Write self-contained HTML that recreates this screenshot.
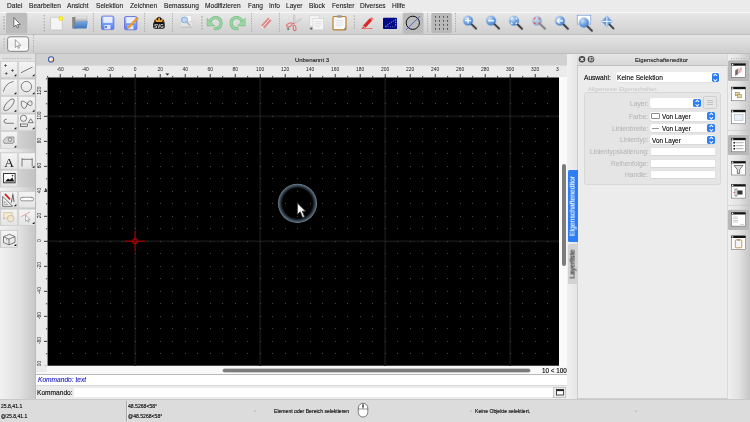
<!DOCTYPE html>
<html><head><meta charset="utf-8">
<style>
*{margin:0;padding:0;box-sizing:border-box}
html,body{width:750px;height:422px;overflow:hidden;background:#e6e6e6;font-family:"Liberation Sans",sans-serif;color:#222}
.a{position:absolute}
.t{position:absolute;white-space:nowrap;line-height:1;will-change:transform}
svg,.lbl{will-change:transform}
#menu{left:0;top:0;width:750px;height:12px;background:#ebebeb}
#menu .t{top:2.6px;font-size:6.6px;color:#141414;-webkit-text-stroke:0.08px #141414}
#tb1{left:0;top:12px;width:750px;height:22.4px;background:linear-gradient(#e8e8e8,#cfcfcf);border-top:1px solid #f8f8f8}
#tb2{left:0;top:34.4px;width:750px;height:19.4px;background:linear-gradient(#e5e5e5,#cdcdcd);border-top:1px solid #bfbfbf;border-bottom:0.9px solid #bdbdbd}
#left{left:0;top:53.5px;width:35.5px;height:345.5px;background:linear-gradient(90deg,#f1f1f1 0%,#e0e0e0 55%,#c6c6c6 100%)}
#mdi{left:35.5px;top:53.5px;width:531px;height:345.5px;background:#e8e8e8}
#status{left:0;top:399px;width:750px;height:23px;background:#dcdcdc;border-top:1px solid #c9c9c9}
#dockstrip{left:566.5px;top:53.5px;width:11px;height:345.5px;background:#e8e8e8}
#dock{left:577px;top:53.5px;width:150.3px;height:345.7px;background:#ececec;border-left:1px solid #cdcdcd;border-bottom:1px solid #cfcfcf}
#rtb{left:727.3px;top:53.5px;width:22.7px;height:345.5px;background:linear-gradient(90deg,#efefef 0%,#e2e2e2 50%,#c6c6c6 100%);border-left:1px solid #d9d9d9}
.combo{background:#fff;border-radius:2px;box-shadow:0 0.2px 0.6px rgba(0,0,0,0.18)}
.bluebtn{background:#2b7cf7;border-radius:1.8px}
.bluebtn::before{content:"";position:absolute;left:50%;top:16%;width:1.6px;height:1.6px;margin-left:-0.8px;border-left:0.6px solid #fff;border-top:0.6px solid #fff;transform:rotate(45deg)}
.bluebtn::after{content:"";position:absolute;left:50%;bottom:16%;width:1.6px;height:1.6px;margin-left:-0.8px;border-right:0.6px solid #fff;border-bottom:0.6px solid #fff;transform:rotate(45deg)}
.field{background:#fff;border:0.5px solid #e2e2e2;border-bottom-color:#d6d6d6}
.lbl{position:absolute;right:calc(750px - 648.2px);font-size:6.65px;line-height:1;color:#b2b2b2;white-space:nowrap}
.st{font-size:5.1px;color:#111;-webkit-text-stroke:0.15px #111}
</style></head><body>
<div id="menu" class="a">
 <span class="t" style="left:7px">Datei</span>
 <span class="t" style="left:28.6px">Bearbeiten</span>
 <span class="t" style="left:67px">Ansicht</span>
 <span class="t" style="left:95.5px">Selektion</span>
 <span class="t" style="left:130px">Zeichnen</span>
 <span class="t" style="left:163.8px">Bemassung</span>
 <span class="t" style="left:205px">Modifizieren</span>
 <span class="t" style="left:248px">Fang</span>
 <span class="t" style="left:268.8px">Info</span>
 <span class="t" style="left:286px">Layer</span>
 <span class="t" style="left:309px">Block</span>
 <span class="t" style="left:331.7px">Fenster</span>
 <span class="t" style="left:360px">Diverses</span>
 <span class="t" style="left:391.7px">Hilfe</span>
</div>
<div id="tb1" class="a"></div>
<svg class="a" style="left:0;top:0" width="750" height="40" viewBox="0 0 750 40"><defs>
 <radialGradient id="lens" cx="0.35" cy="0.3" r="0.8"><stop offset="0" stop-color="#cfe2f8"/><stop offset="0.5" stop-color="#6ea2e0"/><stop offset="1" stop-color="#3a72c4"/></radialGradient>
 <linearGradient id="fold" x1="0" y1="0" x2="0" y2="1"><stop offset="0" stop-color="#7aaae0"/><stop offset="1" stop-color="#3f73b8"/></linearGradient>
 <linearGradient id="flop" x1="0" y1="0" x2="0" y2="1"><stop offset="0" stop-color="#a9c4ff"/><stop offset="1" stop-color="#4f7ef0"/></linearGradient>
 <radialGradient id="yel"><stop offset="0" stop-color="#ffff60"/><stop offset="0.6" stop-color="#f0e020"/><stop offset="1" stop-color="#f0e020" stop-opacity="0"/></radialGradient>
 <g id="mag"><circle r="5.2" fill="url(#lens)" stroke="#c9d3dd" stroke-width="0.8"/><path d="M3.6 3.6L8 8" stroke="#444" stroke-width="1.8" stroke-linecap="round"/><path d="M3.6 3.6L8.6 8.6" stroke="#000" stroke-opacity="0.08" stroke-width="4"/></g>
</defs>
<!-- handle -->
<g fill="#9a9a9a"><rect x="3" y="16.5" width="2" height="0.8"/><rect x="3" y="19.5" width="2" height="0.8"/><rect x="3" y="22.5" width="2" height="0.8"/><rect x="3" y="25.5" width="2" height="0.8"/><rect x="3" y="28.5" width="2" height="0.8"/></g>
<rect x="6" y="12.7" width="21.3" height="20.7" rx="1.5" fill="#bcbcbc"/>
<path d="M13.9 17.6v9.4l2.1-2 1.5 3 1.3-.6-1.4-2.9h2.9z" fill="#fff" stroke="#444" stroke-width="0.7" stroke-linejoin="round"/>
<!-- separators -->
<g fill="#6a6a6a"><circle cx="44.2" cy="15.8" r="0.5"/><circle cx="44.2" cy="18.8" r="0.5"/><circle cx="44.2" cy="21.8" r="0.5"/><circle cx="44.2" cy="24.8" r="0.5"/><circle cx="44.2" cy="27.8" r="0.5"/><circle cx="44.2" cy="30.8" r="0.5"/></g>
<g stroke="#9a9a9a" stroke-width="0.8" stroke-dasharray="1.2 1.3">
 <path d="M93.4 13v20M144.6 13v20M172.5 13v20M251.5 13v20M279.4 13v20M427.6 13v20M455.5 13v20"/>
</g>
<g fill="#a0a0a0"><rect x="201" y="16.5" width="2" height="0.8"/><rect x="201" y="19.5" width="2" height="0.8"/><rect x="201" y="22.5" width="2" height="0.8"/><rect x="201" y="25.5" width="2" height="0.8"/><rect x="201" y="28.5" width="2" height="0.8"/></g>
<g fill="#7a7a7a"><circle cx="354.3" cy="16" r="0.5"/><circle cx="354.3" cy="19" r="0.5"/><circle cx="354.3" cy="22" r="0.5"/><circle cx="354.3" cy="25" r="0.5"/><circle cx="354.3" cy="28" r="0.5"/></g>
<!-- new -->
<rect x="50.5" y="17.3" width="11.8" height="12.7" rx="0.8" fill="#f4f4f4" stroke="#b8b8b8" stroke-width="0.6"/>
<circle cx="60.9" cy="18.5" r="3" fill="url(#yel)"/>
<!-- open -->
<defs><linearGradient id="fback" x1="0" y1="0" x2="1" y2="0"><stop offset="0" stop-color="#9a9a9a"/><stop offset="1" stop-color="#707070"/></linearGradient>
<linearGradient id="paper" x1="0" y1="0" x2="0" y2="1"><stop offset="0" stop-color="#f4f4f4"/><stop offset="1" stop-color="#a8a8a8"/></linearGradient></defs>
<path d="M72 17h4v11.6h-4z" fill="url(#fback)"/>
<rect x="75.2" y="16.1" width="11.8" height="5.6" fill="url(#paper)" stroke="#b0b0b0" stroke-width="0.4"/>
<path d="M75.6 21.2L88 21L86.5 28.6H73.7Z" fill="url(#fold)"/>
<!-- save -->
<rect x="101.5" y="16.1" width="12.4" height="13.5" rx="1.6" fill="url(#flop)" stroke="#6a70d8" stroke-width="0.9"/>
<rect x="103.3" y="16.8" width="9" height="6" fill="#e8eeff"/>
<rect x="104.5" y="25" width="6" height="4.3" fill="#dfe6f6"/><rect x="105.3" y="26" width="1.5" height="2" fill="#3d5bc0"/>
<!-- save as -->
<rect x="124.5" y="16.5" width="12.4" height="13.3" rx="1.6" fill="url(#flop)" stroke="#6a70d8" stroke-width="0.9"/>
<rect x="126.3" y="17.2" width="9" height="6" fill="#e8eeff"/>
<rect x="127.5" y="25.3" width="6" height="4" fill="#dfe6f6"/>
<path d="M128 26.5l9-9.3 1.4 1.4-9 9.3-1.9.5z" fill="#f5a030" stroke="#c07010" stroke-width="0.4"/>
<!-- svg -->
<path d="M153.8 23.2Q154 19.2 156.6 18.6Q157.8 16.8 159.1 16.8Q160.5 16.8 161.6 18.6Q164.3 19.2 164.5 23.2z" fill="#141414"/>
<g fill="#f5a623"><ellipse cx="159.1" cy="19.5" rx="0.9" ry="2.2"/><ellipse cx="156.7" cy="20.6" rx="0.9" ry="2" transform="rotate(-45 156.7 20.6)"/><ellipse cx="161.5" cy="20.6" rx="0.9" ry="2" transform="rotate(45 161.5 20.6)"/><ellipse cx="155.6" cy="22.5" rx="0.8" ry="1.6" transform="rotate(-75 155.6 22.5)"/><ellipse cx="162.6" cy="22.5" rx="0.8" ry="1.6" transform="rotate(75 162.6 22.5)"/><path d="M156 23.3a3.1 3 0 0 1 6.2 0z"/></g>
<rect x="153.2" y="22.1" width="11.5" height="6.6" rx="1.8" fill="#111"/>
<text x="158.95" y="27.9" font-size="5.4" font-weight="bold" fill="#e8e8e8" text-anchor="middle" font-family="Liberation Sans" textLength="9.5" lengthAdjust="spacingAndGlyphs">SVG</text>
<!-- print preview -->
<rect x="182" y="15.4" width="9.7" height="7" fill="#f8f8f8" stroke="#d0d0d0" stroke-width="0.5"/>
<rect x="180" y="21.5" width="13.3" height="6.3" rx="1.2" fill="#e4e4e4" stroke="#c4c4c4" stroke-width="0.5"/>
<rect x="181" y="26.3" width="11.3" height="1.8" fill="#c8c8c8"/>
<path d="M186.8 22.2l3.6 3.4" stroke="#a8a8a8" stroke-width="1.3"/>
<circle cx="184.5" cy="19.8" r="3" fill="#bcd4f0" stroke="#6a9ad8" stroke-width="0.7"/>
<!-- undo/redo -->
<g id="undo">
<path d="M210.2 21.6A5.6 5.6 0 1 1 213.8 28.4" fill="none" stroke="#66b575" stroke-width="3"/>
<path d="M210.2 21.6A5.6 5.6 0 1 1 213.8 28.4" fill="none" stroke="#9ad6a3" stroke-width="1.9"/>
<path d="M207 18.2V25.9H214.7z" fill="#9ad6a3" stroke="#66b575" stroke-width="0.5" stroke-linejoin="round"/>
</g>
<use href="#undo" transform="translate(452.2 0) scale(-1 1)"/>
<!-- eraser -->
<path d="M261 25.6L268.2 17.4L271.6 20.4L264.4 28.6L261.3 29.2z" fill="#e07a7a" opacity="0.9"/>
<path d="M262.6 26.9L269.9 18.9" stroke="#fff" stroke-width="0.9"/>
<path d="M261 25.6l3.4 3-3.1.6z" fill="#f2f2f2"/>
<path d="M261.3 28.8l0.6-.1" stroke="#777" stroke-width="0.6"/>
<path d="M263 28.8h8" stroke="#d6d6d6" stroke-width="0.5"/>
<!-- scissors -->
<path d="M293.6 15.3l1.3 0.2-0.2 8.6-1.2-0.2z" fill="#f4f4f4" stroke="#9a9a9a" stroke-width="0.45"/>
<path d="M300.8 18.6l0.5 1-5.6 3.3-0.6-0.8z" fill="#f4f4f4" stroke="#9a9a9a" stroke-width="0.45"/>
<ellipse cx="289.4" cy="24.9" rx="3.1" ry="1.5" transform="rotate(-28 289.4 24.9)" fill="none" stroke="#e07272" stroke-width="1.1"/>
<ellipse cx="294.6" cy="28" rx="1.4" ry="2.8" transform="rotate(-8 294.6 28)" fill="none" stroke="#e07272" stroke-width="1.1"/>
<path d="M292.3 23.3l2.4 0.3" stroke="#e07272" stroke-width="1"/>
<path d="M288.2 27.6v2.6M286.9 28.9h2.6" stroke="#555" stroke-width="0.7"/>
<!-- copy -->
<rect x="309.8" y="15.8" width="9.3" height="10.6" fill="#f4f4f4" stroke="#c9c9c9" stroke-width="0.5"/>
<rect x="313" y="18.5" width="10.5" height="11.3" fill="#f6f6f6" stroke="#c9c9c9" stroke-width="0.5"/>
<g stroke="#d2d2d2" stroke-width="0.5"><path d="M315 21.5h6.5M315 23.3h6.5M315 25.1h6.5M315 26.9h5"/></g>
<path d="M311.2 27.2v2.8M309.8 28.6h2.8" stroke="#555" stroke-width="0.8"/>
<!-- paste -->
<rect x="333" y="16.5" width="13" height="13.3" rx="1" fill="#fbfbfb" stroke="#b97f2a" stroke-width="1.2"/>
<rect x="336.8" y="15.2" width="5.2" height="2.6" rx="0.8" fill="#9a9a9a"/>
<g stroke="#cfcfcf" stroke-width="0.5"><path d="M335.5 20.5h8M335.5 22.3h8M335.5 24.1h8M335.5 25.9h6"/></g>
<path d="M346 26.8l-3 3h3z" fill="#888"/>
<!-- pencil -->
<rect x="361.5" y="28.1" width="11" height="0.8" fill="#f05a5a"/>
<path d="M363.3 25.6L369.8 18.6L371.9 20.5L365.4 27.5L362.6 28.2z" fill="#dd1a1a" stroke="#a81010" stroke-width="0.35"/>
<path d="M364.2 26.3L370.5 19.5" stroke="#f05050" stroke-width="0.5"/>
<path d="M369.8 18.6L370.9 17.5Q371.6 17 372.4 17.7L373 18.3Q373.5 19 372.9 19.6L371.9 20.5z" fill="#f07070"/>
<path d="M363.3 25.6L365.4 27.5L362.6 28.2z" fill="#e8c8a0"/>
<path d="M362.6 28.2l0.9-1.5 0.6.6z" fill="#333"/>
<!-- blue box -->
<rect x="383" y="17.8" width="14" height="11.2" rx="0.8" fill="#000a86"/>
<g stroke="#fff" stroke-width="0.65" fill="none">
<path d="M385.3 26.5L395.5 19.5" stroke-dasharray="1.2 1.2"/>
<path d="M395.7 19.4V26.6" stroke-dasharray="1.3 1.1"/>
<path d="M385.5 26.8H395.5" stroke-dasharray="1 1.2" stroke-opacity="0.6"/>
</g>
<!-- circle btn -->
<rect x="402.7" y="12.7" width="20.8" height="21" rx="1.5" fill="#bcbcbc"/>
<circle cx="412.8" cy="22.8" r="6.6" fill="none" stroke="#111" stroke-width="1"/>
<path d="M406.2 29.7L420 16.1" stroke="#3040e0" stroke-width="0.7"/>
<!-- grid btn -->
<rect x="431.3" y="13" width="20.6" height="20.3" rx="1.5" fill="#b9b9b9"/>
<g fill="#3a3a3a">
<path d="M435 16.1h0.8v1.7h-0.8zM439.1 16.1h0.8v1.7h-0.8zM443.1 16.1h0.8v1.7h-0.8zM447.2 16.1h0.8v1.7h-0.8z"/>
<path d="M435 20.1h0.8v1.7h-0.8zM439.1 20.1h0.8v1.7h-0.8zM443.1 20.1h0.8v1.7h-0.8zM447.2 20.1h0.8v1.7h-0.8z"/>
<path d="M435 24.1h0.8v1.7h-0.8zM439.1 24.1h0.8v1.7h-0.8zM443.1 24.1h0.8v1.7h-0.8zM447.2 24.1h0.8v1.7h-0.8z"/>
<path d="M435 28h0.8v1.7h-0.8zM439.1 28h0.8v1.7h-0.8zM443.1 28h0.8v1.7h-0.8zM447.2 28h0.8v1.7h-0.8z"/>
</g>
<!-- zoom icons -->
<use href="#mag" x="468.1" y="20.7"/>
<path d="M465.2 20.7h5.8M468.1 17.8v5.8" stroke="#fff" stroke-width="1.3" opacity="0.9"/>
<use href="#mag" x="491.1" y="20.7"/>
<path d="M488.2 20.7h5.8" stroke="#fff" stroke-width="1.5" opacity="0.9"/>
<use href="#mag" x="514.1" y="20.9"/>
<path d="M511.3 19.6v-1.5h1.5M515.4 18.1h1.5v1.5M516.9 22.2v1.5h-1.5M512.8 23.7h-1.5v-1.5" fill="none" stroke="#fff" stroke-width="0.9"/>
<g opacity="0.55"><use href="#mag" x="537.1" y="20.9"/></g>
<path d="M534.3 19.6v-1.5h1.5M538.4 18.1h1.5v1.5M539.9 22.2v1.5h-1.5M535.8 23.7h-1.5v-1.5" fill="none" stroke="#e05050" stroke-width="1"/>
<use href="#mag" x="560" y="20.9"/>
<path d="M563 20.9h-5M559.5 18.6l-2.4 2.3 2.4 2.3" fill="none" stroke="#fff" stroke-width="1.3"/>
<rect x="577.2" y="15.2" width="13.6" height="8.9" fill="#fff" stroke="#5a8ad0" stroke-width="0.6"/>
<use href="#mag" x="584" y="22.8"/>
<path d="M606.9 15.5l5.8 5.9-5.8 5.9-5.8-5.9z" fill="#6a9ee0" stroke="#c0d4ea" stroke-width="0.5"/>
<path d="M602 21.4h9.8M606.9 16.5v9.8" stroke="#fff" stroke-width="0.9"/>
<path d="M609.5 24.5L613.5 28.5" stroke="#444" stroke-width="1.8" stroke-linecap="round"/>
</svg>
<div id="tb2" class="a"></div>
<div id="left" class="a"></div>
<svg class="a" style="left:0;top:0" width="36" height="400" viewBox="0 0 36 400">
 <rect x="0" y="53.5" width="35.3" height="8" fill="#e0e0e0"/>
 <path d="M3 58.4h29" stroke="#a8a8a8" stroke-width="0.8" stroke-dasharray="1.5 1.4"/>
 <defs><linearGradient id="lsec" x1="0" y1="0" x2="1" y2="0"><stop offset="0" stop-color="#cacaca"/><stop offset="0.5" stop-color="#d2d2d2"/><stop offset="1" stop-color="#c2c2c2"/></linearGradient></defs>
 <rect x="0" y="61" width="35.3" height="87.8" fill="url(#lsec)"/>
 <rect x="0" y="152.3" width="35.3" height="35" fill="url(#lsec)"/>
 <rect x="0" y="191" width="35.3" height="35" fill="url(#lsec)"/>
 <rect x="0" y="229.9" width="17.9" height="18" fill="#c6c6c6"/>
 <defs><linearGradient id="btn" x1="0" y1="0" x2="0" y2="1"><stop offset="0" stop-color="#f5f5f5"/><stop offset="1" stop-color="#e4e4e4"/></linearGradient></defs>
<rect x="0.9" y="61.7" width="16.30" height="15.80" fill="url(#btn)" stroke="#d0d0d0" stroke-width="0.5"/>
<rect x="18.8" y="61.7" width="16.30" height="15.80" fill="url(#btn)" stroke="#d0d0d0" stroke-width="0.5"/>
<rect x="0.9" y="79.2" width="16.30" height="16.20" fill="url(#btn)" stroke="#d0d0d0" stroke-width="0.5"/>
<rect x="18.8" y="79.2" width="16.30" height="16.20" fill="url(#btn)" stroke="#d0d0d0" stroke-width="0.5"/>
<rect x="0.9" y="96.7" width="16.30" height="16.20" fill="url(#btn)" stroke="#d0d0d0" stroke-width="0.5"/>
<rect x="18.8" y="96.7" width="16.30" height="16.20" fill="url(#btn)" stroke="#d0d0d0" stroke-width="0.5"/>
<rect x="0.9" y="114.2" width="16.30" height="16.30" fill="url(#btn)" stroke="#d0d0d0" stroke-width="0.5"/>
<rect x="18.8" y="114.2" width="16.30" height="16.30" fill="url(#btn)" stroke="#d0d0d0" stroke-width="0.5"/>
<rect x="0.9" y="131.6" width="16.30" height="17.10" fill="url(#btn)" stroke="#d0d0d0" stroke-width="0.5"/>
<rect x="0.9" y="153" width="16.30" height="16.00" fill="url(#btn)" stroke="#d0d0d0" stroke-width="0.5"/>
<rect x="18.8" y="153" width="16.30" height="16.00" fill="url(#btn)" stroke="#d0d0d0" stroke-width="0.5"/>
<rect x="0.9" y="170.5" width="16.30" height="16.20" fill="url(#btn)" stroke="#d0d0d0" stroke-width="0.5"/>
<rect x="0.9" y="191.8" width="16.30" height="15.70" fill="url(#btn)" stroke="#d0d0d0" stroke-width="0.5"/>
<rect x="18.8" y="191.8" width="16.30" height="15.70" fill="url(#btn)" stroke="#d0d0d0" stroke-width="0.5"/>
<rect x="0.9" y="209.3" width="16.30" height="15.90" fill="url(#btn)" stroke="#d0d0d0" stroke-width="0.5"/>
<rect x="18.8" y="209.3" width="16.30" height="15.90" fill="url(#btn)" stroke="#d0d0d0" stroke-width="0.5"/>
<rect x="0.9" y="230.6" width="16.30" height="16.70" fill="url(#btn)" stroke="#d0d0d0" stroke-width="0.5"/>
 <g fill="#111">
 <path d="M14 76.3h2.3v-2.3z"/><path d="M32.2 76.3h2.3v-2.3z"/>
 <path d="M14 94.2h2.3v-2.3z"/><path d="M32.2 94.2h2.3v-2.3z"/>
 <path d="M14 111.7h2.3v-2.3z"/><path d="M32.2 111.7h2.3v-2.3z"/>
 <path d="M14 129.3h2.3v-2.3z"/><path d="M32.2 129.3h2.3v-2.3z"/>
 <path d="M14 147.5h2.3v-2.3z"/>
 <path d="M32.2 167.8h2.3v-2.3z"/>
 <path d="M14 206.3h2.3v-2.3z"/><path d="M32.2 224h2.3v-2.3z"/>
 <path d="M14 246.1h2.3v-2.3z"/>
</g>
<g fill="none" stroke="#333" stroke-width="0.6">
 <!-- points -->
 <path d="M5.5 64v3M4 65.5h3M12.5 69v3M11 70.5h3M6.3 72v3M4.8 73.5h3"/>
 <!-- line -->
 <path d="M21 72.8L32.5 67"/>
 <!-- arc -->
 <path d="M3.4 91.5Q5.5 83 13.5 81.5"/>
 <!-- circle -->
 <circle cx="26.4" cy="86.6" r="5.2"/>
 <!-- ellipse -->
 <ellipse cx="9" cy="104.8" rx="7.3" ry="2.9" transform="rotate(-50 9 104.8)"/>
 <!-- spline -->
 <path d="M21.2 101.5Q21 108 24.3 108.5Q26.5 108 27.3 104Q28 101.5 30 100.8Q32.5 101 32 103.5Q32 106.5 29 105Q26 103 24.5 101.7Q22.5 100.5 21.2 101.5z"/>
 <!-- polyline -->
 <path d="M6.8 119.2Q4 119.2 4 121.2Q4 123.3 6.8 123.3H13.8"/>
 <!-- shapes -->
 <circle cx="23.5" cy="118.3" r="3.1"/><path d="M28.2 122.7l2.5-4 2.5 4z"/><rect x="20.5" y="124" width="6.8" height="2.6"/>
 <!-- hatch -->
 <g transform="translate(0 -1)"><path d="M3.3 141.5l3.4-3.5h7.2v5.5l-0.8 0.8h-9z" fill="#d0d0d0" stroke="#777" stroke-width="0.7"/>
 <path d="M4.5 143l3-3M6.5 143.5l4-4M10 143.5l3.5-3.5" stroke="#f0f0f0" stroke-width="0.4"/>
 <circle cx="10" cy="140.6" r="1.7" fill="#e8e8e8" stroke="#666" stroke-width="0.7"/></g>
 <!-- dimension -->
 <path d="M22 158.2v8.3M32.2 158.2v8.3M22 159.3h10.2" stroke="#333"/>
</g>
<text x="9" y="166.8" font-family="Liberation Serif" font-size="13.5" text-anchor="middle" fill="#111">A</text>
<!-- image -->
<rect x="3.6" y="173.5" width="11.5" height="9.3" fill="#fff" stroke="#222" stroke-width="0.9"/>
<path d="M5 181.6l3-3 2 1.2 2.2-2.4 2.1 4.2z" fill="#111"/><circle cx="12.5" cy="175.8" r="0.8" fill="#111"/>
<!-- dim tools -->
<path d="M2.7 196.4V206.3H12.6Z" fill="#f4f4f4" stroke="#555" stroke-width="0.8" stroke-linejoin="round"/>
<path d="M4.6 201.2V204.5H7.9Z" fill="none" stroke="#888" stroke-width="0.6"/>
<path d="M5.3 194.3L9.6 198.8" stroke="#d42020" stroke-width="1.7" stroke-linecap="round"/>
<path d="M12.9 193.4v1.6M12.9 195L11.3 202.6M12.9 195L14.1 202" stroke="#444" stroke-width="0.8" fill="none"/>
<!-- measure -->
<rect x="20.5" y="197.3" width="13" height="3.5" rx="1.6" fill="#fff" stroke="#555" stroke-width="0.6"/>
<path d="M22.5 197.3v1M31.5 197.3v1" stroke="#555" stroke-width="0.5"/>
<!-- modify -->
<rect x="3.8" y="212.4" width="8.4" height="5.6" fill="#f2ebcc" stroke="#c0b8a0" stroke-width="0.6"/>
<circle cx="10.7" cy="218.6" r="3.3" fill="#efe8cc" fill-opacity="0.85" stroke="#bab2a0" stroke-width="0.7"/>
<path d="M3 218.8h1.8" stroke="#f07a7a" stroke-width="0.7"/>
<!-- select modify -->
<path d="M20.8 216.9l9.2-5" stroke="#e84a4a" stroke-width="0.7" stroke-dasharray="0.8 0.4"/>
<path d="M25.6 215v6.4l1.5-1.4 1.1 2.2.9-.4-1.1-2.1h2z" fill="#fafafa" stroke="#777" stroke-width="0.5"/>
<!-- 3D block -->
<path d="M3.5 236.8l6-2.5 5.5 2.3v5.7l-6 2.5-5.5-2.3z M3.5 236.8l5.5 2.3 6-2.5M9 239.1v5.7" fill="none" stroke="#333" stroke-width="0.6"/>
<path d="M6 239.5l1.2.5" stroke="#333" stroke-width="0.5"/>

</svg>
<div id="mdi" class="a"></div>
<svg class="a" style="left:0;top:0" width="750" height="422" viewBox="0 0 750 422">
 <rect x="36" y="53.5" width="531" height="12.3" fill="#d1d1d1"/>
 <rect x="36" y="53" width="531" height="0.8" fill="#bdbdbd"/>
 <rect x="36" y="65.8" width="523" height="11.7" fill="#ebebeb"/>
 <rect x="36" y="77" width="11.3" height="289" fill="#ebebeb"/>
 <rect x="559" y="65.8" width="8" height="11.2" fill="#ebebeb"/><rect x="559" y="77" width="8" height="290" fill="#fafafa"/>
 <rect x="35.3" y="53.5" width="0.8" height="346" fill="#b8b8b8"/>
 <rect x="47.6" y="77.5" width="511.40" height="288.20" fill="#000"/>
<rect x="134.20" y="77.5" width="2" height="288.20" fill="#131313"/>
<rect x="259.20" y="77.5" width="2" height="288.20" fill="#131313"/>
<rect x="384.20" y="77.5" width="2" height="288.20" fill="#131313"/>
<rect x="509.20" y="77.5" width="2" height="288.20" fill="#131313"/>
<rect x="47.6" y="240.30" width="511.40" height="2" fill="#131313"/>
<rect x="47.6" y="115.30" width="511.40" height="2" fill="#131313"/>
<path d="M60 353h1v1h-1zM60 341h1v1h-1zM60 328h1v1h-1zM60 316h1v1h-1zM60 303h1v1h-1zM60 291h1v1h-1zM60 278h1v1h-1zM60 266h1v1h-1zM60 253h1v1h-1zM60 241h1v1h-1zM60 228h1v1h-1zM60 216h1v1h-1zM60 203h1v1h-1zM60 191h1v1h-1zM60 178h1v1h-1zM60 166h1v1h-1zM60 153h1v1h-1zM60 141h1v1h-1zM60 128h1v1h-1zM60 116h1v1h-1zM60 103h1v1h-1zM60 91h1v1h-1zM72 353h1v1h-1zM72 341h1v1h-1zM72 328h1v1h-1zM72 316h1v1h-1zM72 303h1v1h-1zM72 291h1v1h-1zM72 278h1v1h-1zM72 266h1v1h-1zM72 253h1v1h-1zM72 241h1v1h-1zM72 228h1v1h-1zM72 216h1v1h-1zM72 203h1v1h-1zM72 191h1v1h-1zM72 178h1v1h-1zM72 166h1v1h-1zM72 153h1v1h-1zM72 141h1v1h-1zM72 128h1v1h-1zM72 116h1v1h-1zM72 103h1v1h-1zM72 91h1v1h-1zM85 353h1v1h-1zM85 341h1v1h-1zM85 328h1v1h-1zM85 316h1v1h-1zM85 303h1v1h-1zM85 291h1v1h-1zM85 278h1v1h-1zM85 266h1v1h-1zM85 253h1v1h-1zM85 241h1v1h-1zM85 228h1v1h-1zM85 216h1v1h-1zM85 203h1v1h-1zM85 191h1v1h-1zM85 178h1v1h-1zM85 166h1v1h-1zM85 153h1v1h-1zM85 141h1v1h-1zM85 128h1v1h-1zM85 116h1v1h-1zM85 103h1v1h-1zM85 91h1v1h-1zM97 353h1v1h-1zM97 341h1v1h-1zM97 328h1v1h-1zM97 316h1v1h-1zM97 303h1v1h-1zM97 291h1v1h-1zM97 278h1v1h-1zM97 266h1v1h-1zM97 253h1v1h-1zM97 241h1v1h-1zM97 228h1v1h-1zM97 216h1v1h-1zM97 203h1v1h-1zM97 191h1v1h-1zM97 178h1v1h-1zM97 166h1v1h-1zM97 153h1v1h-1zM97 141h1v1h-1zM97 128h1v1h-1zM97 116h1v1h-1zM97 103h1v1h-1zM97 91h1v1h-1zM110 353h1v1h-1zM110 341h1v1h-1zM110 328h1v1h-1zM110 316h1v1h-1zM110 303h1v1h-1zM110 291h1v1h-1zM110 278h1v1h-1zM110 266h1v1h-1zM110 253h1v1h-1zM110 241h1v1h-1zM110 228h1v1h-1zM110 216h1v1h-1zM110 203h1v1h-1zM110 191h1v1h-1zM110 178h1v1h-1zM110 166h1v1h-1zM110 153h1v1h-1zM110 141h1v1h-1zM110 128h1v1h-1zM110 116h1v1h-1zM110 103h1v1h-1zM110 91h1v1h-1zM122 353h1v1h-1zM122 341h1v1h-1zM122 328h1v1h-1zM122 316h1v1h-1zM122 303h1v1h-1zM122 291h1v1h-1zM122 278h1v1h-1zM122 266h1v1h-1zM122 253h1v1h-1zM122 241h1v1h-1zM122 228h1v1h-1zM122 216h1v1h-1zM122 203h1v1h-1zM122 191h1v1h-1zM122 178h1v1h-1zM122 166h1v1h-1zM122 153h1v1h-1zM122 141h1v1h-1zM122 128h1v1h-1zM122 116h1v1h-1zM122 103h1v1h-1zM122 91h1v1h-1zM135 353h1v1h-1zM135 341h1v1h-1zM135 328h1v1h-1zM135 316h1v1h-1zM135 303h1v1h-1zM135 291h1v1h-1zM135 278h1v1h-1zM135 266h1v1h-1zM135 253h1v1h-1zM135 241h1v1h-1zM135 228h1v1h-1zM135 216h1v1h-1zM135 203h1v1h-1zM135 191h1v1h-1zM135 178h1v1h-1zM135 166h1v1h-1zM135 153h1v1h-1zM135 141h1v1h-1zM135 128h1v1h-1zM135 116h1v1h-1zM135 103h1v1h-1zM135 91h1v1h-1zM147 353h1v1h-1zM147 341h1v1h-1zM147 328h1v1h-1zM147 316h1v1h-1zM147 303h1v1h-1zM147 291h1v1h-1zM147 278h1v1h-1zM147 266h1v1h-1zM147 253h1v1h-1zM147 241h1v1h-1zM147 228h1v1h-1zM147 216h1v1h-1zM147 203h1v1h-1zM147 191h1v1h-1zM147 178h1v1h-1zM147 166h1v1h-1zM147 153h1v1h-1zM147 141h1v1h-1zM147 128h1v1h-1zM147 116h1v1h-1zM147 103h1v1h-1zM147 91h1v1h-1zM160 353h1v1h-1zM160 341h1v1h-1zM160 328h1v1h-1zM160 316h1v1h-1zM160 303h1v1h-1zM160 291h1v1h-1zM160 278h1v1h-1zM160 266h1v1h-1zM160 253h1v1h-1zM160 241h1v1h-1zM160 228h1v1h-1zM160 216h1v1h-1zM160 203h1v1h-1zM160 191h1v1h-1zM160 178h1v1h-1zM160 166h1v1h-1zM160 153h1v1h-1zM160 141h1v1h-1zM160 128h1v1h-1zM160 116h1v1h-1zM160 103h1v1h-1zM160 91h1v1h-1zM172 353h1v1h-1zM172 341h1v1h-1zM172 328h1v1h-1zM172 316h1v1h-1zM172 303h1v1h-1zM172 291h1v1h-1zM172 278h1v1h-1zM172 266h1v1h-1zM172 253h1v1h-1zM172 241h1v1h-1zM172 228h1v1h-1zM172 216h1v1h-1zM172 203h1v1h-1zM172 191h1v1h-1zM172 178h1v1h-1zM172 166h1v1h-1zM172 153h1v1h-1zM172 141h1v1h-1zM172 128h1v1h-1zM172 116h1v1h-1zM172 103h1v1h-1zM172 91h1v1h-1zM185 353h1v1h-1zM185 341h1v1h-1zM185 328h1v1h-1zM185 316h1v1h-1zM185 303h1v1h-1zM185 291h1v1h-1zM185 278h1v1h-1zM185 266h1v1h-1zM185 253h1v1h-1zM185 241h1v1h-1zM185 228h1v1h-1zM185 216h1v1h-1zM185 203h1v1h-1zM185 191h1v1h-1zM185 178h1v1h-1zM185 166h1v1h-1zM185 153h1v1h-1zM185 141h1v1h-1zM185 128h1v1h-1zM185 116h1v1h-1zM185 103h1v1h-1zM185 91h1v1h-1zM197 353h1v1h-1zM197 341h1v1h-1zM197 328h1v1h-1zM197 316h1v1h-1zM197 303h1v1h-1zM197 291h1v1h-1zM197 278h1v1h-1zM197 266h1v1h-1zM197 253h1v1h-1zM197 241h1v1h-1zM197 228h1v1h-1zM197 216h1v1h-1zM197 203h1v1h-1zM197 191h1v1h-1zM197 178h1v1h-1zM197 166h1v1h-1zM197 153h1v1h-1zM197 141h1v1h-1zM197 128h1v1h-1zM197 116h1v1h-1zM197 103h1v1h-1zM197 91h1v1h-1zM210 353h1v1h-1zM210 341h1v1h-1zM210 328h1v1h-1zM210 316h1v1h-1zM210 303h1v1h-1zM210 291h1v1h-1zM210 278h1v1h-1zM210 266h1v1h-1zM210 253h1v1h-1zM210 241h1v1h-1zM210 228h1v1h-1zM210 216h1v1h-1zM210 203h1v1h-1zM210 191h1v1h-1zM210 178h1v1h-1zM210 166h1v1h-1zM210 153h1v1h-1zM210 141h1v1h-1zM210 128h1v1h-1zM210 116h1v1h-1zM210 103h1v1h-1zM210 91h1v1h-1zM222 353h1v1h-1zM222 341h1v1h-1zM222 328h1v1h-1zM222 316h1v1h-1zM222 303h1v1h-1zM222 291h1v1h-1zM222 278h1v1h-1zM222 266h1v1h-1zM222 253h1v1h-1zM222 241h1v1h-1zM222 228h1v1h-1zM222 216h1v1h-1zM222 203h1v1h-1zM222 191h1v1h-1zM222 178h1v1h-1zM222 166h1v1h-1zM222 153h1v1h-1zM222 141h1v1h-1zM222 128h1v1h-1zM222 116h1v1h-1zM222 103h1v1h-1zM222 91h1v1h-1zM235 353h1v1h-1zM235 341h1v1h-1zM235 328h1v1h-1zM235 316h1v1h-1zM235 303h1v1h-1zM235 291h1v1h-1zM235 278h1v1h-1zM235 266h1v1h-1zM235 253h1v1h-1zM235 241h1v1h-1zM235 228h1v1h-1zM235 216h1v1h-1zM235 203h1v1h-1zM235 191h1v1h-1zM235 178h1v1h-1zM235 166h1v1h-1zM235 153h1v1h-1zM235 141h1v1h-1zM235 128h1v1h-1zM235 116h1v1h-1zM235 103h1v1h-1zM235 91h1v1h-1zM247 353h1v1h-1zM247 341h1v1h-1zM247 328h1v1h-1zM247 316h1v1h-1zM247 303h1v1h-1zM247 291h1v1h-1zM247 278h1v1h-1zM247 266h1v1h-1zM247 253h1v1h-1zM247 241h1v1h-1zM247 228h1v1h-1zM247 216h1v1h-1zM247 203h1v1h-1zM247 191h1v1h-1zM247 178h1v1h-1zM247 166h1v1h-1zM247 153h1v1h-1zM247 141h1v1h-1zM247 128h1v1h-1zM247 116h1v1h-1zM247 103h1v1h-1zM247 91h1v1h-1zM260 353h1v1h-1zM260 341h1v1h-1zM260 328h1v1h-1zM260 316h1v1h-1zM260 303h1v1h-1zM260 291h1v1h-1zM260 278h1v1h-1zM260 266h1v1h-1zM260 253h1v1h-1zM260 241h1v1h-1zM260 228h1v1h-1zM260 216h1v1h-1zM260 203h1v1h-1zM260 191h1v1h-1zM260 178h1v1h-1zM260 166h1v1h-1zM260 153h1v1h-1zM260 141h1v1h-1zM260 128h1v1h-1zM260 116h1v1h-1zM260 103h1v1h-1zM260 91h1v1h-1zM272 353h1v1h-1zM272 341h1v1h-1zM272 328h1v1h-1zM272 316h1v1h-1zM272 303h1v1h-1zM272 291h1v1h-1zM272 278h1v1h-1zM272 266h1v1h-1zM272 253h1v1h-1zM272 241h1v1h-1zM272 228h1v1h-1zM272 216h1v1h-1zM272 203h1v1h-1zM272 191h1v1h-1zM272 178h1v1h-1zM272 166h1v1h-1zM272 153h1v1h-1zM272 141h1v1h-1zM272 128h1v1h-1zM272 116h1v1h-1zM272 103h1v1h-1zM272 91h1v1h-1zM285 353h1v1h-1zM285 341h1v1h-1zM285 328h1v1h-1zM285 316h1v1h-1zM285 303h1v1h-1zM285 291h1v1h-1zM285 278h1v1h-1zM285 266h1v1h-1zM285 253h1v1h-1zM285 241h1v1h-1zM285 228h1v1h-1zM285 216h1v1h-1zM285 203h1v1h-1zM285 191h1v1h-1zM285 178h1v1h-1zM285 166h1v1h-1zM285 153h1v1h-1zM285 141h1v1h-1zM285 128h1v1h-1zM285 116h1v1h-1zM285 103h1v1h-1zM285 91h1v1h-1zM297 353h1v1h-1zM297 341h1v1h-1zM297 328h1v1h-1zM297 316h1v1h-1zM297 303h1v1h-1zM297 291h1v1h-1zM297 278h1v1h-1zM297 266h1v1h-1zM297 253h1v1h-1zM297 241h1v1h-1zM297 228h1v1h-1zM297 216h1v1h-1zM297 203h1v1h-1zM297 191h1v1h-1zM297 178h1v1h-1zM297 166h1v1h-1zM297 153h1v1h-1zM297 141h1v1h-1zM297 128h1v1h-1zM297 116h1v1h-1zM297 103h1v1h-1zM297 91h1v1h-1zM310 353h1v1h-1zM310 341h1v1h-1zM310 328h1v1h-1zM310 316h1v1h-1zM310 303h1v1h-1zM310 291h1v1h-1zM310 278h1v1h-1zM310 266h1v1h-1zM310 253h1v1h-1zM310 241h1v1h-1zM310 228h1v1h-1zM310 216h1v1h-1zM310 203h1v1h-1zM310 191h1v1h-1zM310 178h1v1h-1zM310 166h1v1h-1zM310 153h1v1h-1zM310 141h1v1h-1zM310 128h1v1h-1zM310 116h1v1h-1zM310 103h1v1h-1zM310 91h1v1h-1zM322 353h1v1h-1zM322 341h1v1h-1zM322 328h1v1h-1zM322 316h1v1h-1zM322 303h1v1h-1zM322 291h1v1h-1zM322 278h1v1h-1zM322 266h1v1h-1zM322 253h1v1h-1zM322 241h1v1h-1zM322 228h1v1h-1zM322 216h1v1h-1zM322 203h1v1h-1zM322 191h1v1h-1zM322 178h1v1h-1zM322 166h1v1h-1zM322 153h1v1h-1zM322 141h1v1h-1zM322 128h1v1h-1zM322 116h1v1h-1zM322 103h1v1h-1zM322 91h1v1h-1zM335 353h1v1h-1zM335 341h1v1h-1zM335 328h1v1h-1zM335 316h1v1h-1zM335 303h1v1h-1zM335 291h1v1h-1zM335 278h1v1h-1zM335 266h1v1h-1zM335 253h1v1h-1zM335 241h1v1h-1zM335 228h1v1h-1zM335 216h1v1h-1zM335 203h1v1h-1zM335 191h1v1h-1zM335 178h1v1h-1zM335 166h1v1h-1zM335 153h1v1h-1zM335 141h1v1h-1zM335 128h1v1h-1zM335 116h1v1h-1zM335 103h1v1h-1zM335 91h1v1h-1zM347 353h1v1h-1zM347 341h1v1h-1zM347 328h1v1h-1zM347 316h1v1h-1zM347 303h1v1h-1zM347 291h1v1h-1zM347 278h1v1h-1zM347 266h1v1h-1zM347 253h1v1h-1zM347 241h1v1h-1zM347 228h1v1h-1zM347 216h1v1h-1zM347 203h1v1h-1zM347 191h1v1h-1zM347 178h1v1h-1zM347 166h1v1h-1zM347 153h1v1h-1zM347 141h1v1h-1zM347 128h1v1h-1zM347 116h1v1h-1zM347 103h1v1h-1zM347 91h1v1h-1zM360 353h1v1h-1zM360 341h1v1h-1zM360 328h1v1h-1zM360 316h1v1h-1zM360 303h1v1h-1zM360 291h1v1h-1zM360 278h1v1h-1zM360 266h1v1h-1zM360 253h1v1h-1zM360 241h1v1h-1zM360 228h1v1h-1zM360 216h1v1h-1zM360 203h1v1h-1zM360 191h1v1h-1zM360 178h1v1h-1zM360 166h1v1h-1zM360 153h1v1h-1zM360 141h1v1h-1zM360 128h1v1h-1zM360 116h1v1h-1zM360 103h1v1h-1zM360 91h1v1h-1zM372 353h1v1h-1zM372 341h1v1h-1zM372 328h1v1h-1zM372 316h1v1h-1zM372 303h1v1h-1zM372 291h1v1h-1zM372 278h1v1h-1zM372 266h1v1h-1zM372 253h1v1h-1zM372 241h1v1h-1zM372 228h1v1h-1zM372 216h1v1h-1zM372 203h1v1h-1zM372 191h1v1h-1zM372 178h1v1h-1zM372 166h1v1h-1zM372 153h1v1h-1zM372 141h1v1h-1zM372 128h1v1h-1zM372 116h1v1h-1zM372 103h1v1h-1zM372 91h1v1h-1zM385 353h1v1h-1zM385 341h1v1h-1zM385 328h1v1h-1zM385 316h1v1h-1zM385 303h1v1h-1zM385 291h1v1h-1zM385 278h1v1h-1zM385 266h1v1h-1zM385 253h1v1h-1zM385 241h1v1h-1zM385 228h1v1h-1zM385 216h1v1h-1zM385 203h1v1h-1zM385 191h1v1h-1zM385 178h1v1h-1zM385 166h1v1h-1zM385 153h1v1h-1zM385 141h1v1h-1zM385 128h1v1h-1zM385 116h1v1h-1zM385 103h1v1h-1zM385 91h1v1h-1zM397 353h1v1h-1zM397 341h1v1h-1zM397 328h1v1h-1zM397 316h1v1h-1zM397 303h1v1h-1zM397 291h1v1h-1zM397 278h1v1h-1zM397 266h1v1h-1zM397 253h1v1h-1zM397 241h1v1h-1zM397 228h1v1h-1zM397 216h1v1h-1zM397 203h1v1h-1zM397 191h1v1h-1zM397 178h1v1h-1zM397 166h1v1h-1zM397 153h1v1h-1zM397 141h1v1h-1zM397 128h1v1h-1zM397 116h1v1h-1zM397 103h1v1h-1zM397 91h1v1h-1zM410 353h1v1h-1zM410 341h1v1h-1zM410 328h1v1h-1zM410 316h1v1h-1zM410 303h1v1h-1zM410 291h1v1h-1zM410 278h1v1h-1zM410 266h1v1h-1zM410 253h1v1h-1zM410 241h1v1h-1zM410 228h1v1h-1zM410 216h1v1h-1zM410 203h1v1h-1zM410 191h1v1h-1zM410 178h1v1h-1zM410 166h1v1h-1zM410 153h1v1h-1zM410 141h1v1h-1zM410 128h1v1h-1zM410 116h1v1h-1zM410 103h1v1h-1zM410 91h1v1h-1zM422 353h1v1h-1zM422 341h1v1h-1zM422 328h1v1h-1zM422 316h1v1h-1zM422 303h1v1h-1zM422 291h1v1h-1zM422 278h1v1h-1zM422 266h1v1h-1zM422 253h1v1h-1zM422 241h1v1h-1zM422 228h1v1h-1zM422 216h1v1h-1zM422 203h1v1h-1zM422 191h1v1h-1zM422 178h1v1h-1zM422 166h1v1h-1zM422 153h1v1h-1zM422 141h1v1h-1zM422 128h1v1h-1zM422 116h1v1h-1zM422 103h1v1h-1zM422 91h1v1h-1zM435 353h1v1h-1zM435 341h1v1h-1zM435 328h1v1h-1zM435 316h1v1h-1zM435 303h1v1h-1zM435 291h1v1h-1zM435 278h1v1h-1zM435 266h1v1h-1zM435 253h1v1h-1zM435 241h1v1h-1zM435 228h1v1h-1zM435 216h1v1h-1zM435 203h1v1h-1zM435 191h1v1h-1zM435 178h1v1h-1zM435 166h1v1h-1zM435 153h1v1h-1zM435 141h1v1h-1zM435 128h1v1h-1zM435 116h1v1h-1zM435 103h1v1h-1zM435 91h1v1h-1zM447 353h1v1h-1zM447 341h1v1h-1zM447 328h1v1h-1zM447 316h1v1h-1zM447 303h1v1h-1zM447 291h1v1h-1zM447 278h1v1h-1zM447 266h1v1h-1zM447 253h1v1h-1zM447 241h1v1h-1zM447 228h1v1h-1zM447 216h1v1h-1zM447 203h1v1h-1zM447 191h1v1h-1zM447 178h1v1h-1zM447 166h1v1h-1zM447 153h1v1h-1zM447 141h1v1h-1zM447 128h1v1h-1zM447 116h1v1h-1zM447 103h1v1h-1zM447 91h1v1h-1zM460 353h1v1h-1zM460 341h1v1h-1zM460 328h1v1h-1zM460 316h1v1h-1zM460 303h1v1h-1zM460 291h1v1h-1zM460 278h1v1h-1zM460 266h1v1h-1zM460 253h1v1h-1zM460 241h1v1h-1zM460 228h1v1h-1zM460 216h1v1h-1zM460 203h1v1h-1zM460 191h1v1h-1zM460 178h1v1h-1zM460 166h1v1h-1zM460 153h1v1h-1zM460 141h1v1h-1zM460 128h1v1h-1zM460 116h1v1h-1zM460 103h1v1h-1zM460 91h1v1h-1zM472 353h1v1h-1zM472 341h1v1h-1zM472 328h1v1h-1zM472 316h1v1h-1zM472 303h1v1h-1zM472 291h1v1h-1zM472 278h1v1h-1zM472 266h1v1h-1zM472 253h1v1h-1zM472 241h1v1h-1zM472 228h1v1h-1zM472 216h1v1h-1zM472 203h1v1h-1zM472 191h1v1h-1zM472 178h1v1h-1zM472 166h1v1h-1zM472 153h1v1h-1zM472 141h1v1h-1zM472 128h1v1h-1zM472 116h1v1h-1zM472 103h1v1h-1zM472 91h1v1h-1zM485 353h1v1h-1zM485 341h1v1h-1zM485 328h1v1h-1zM485 316h1v1h-1zM485 303h1v1h-1zM485 291h1v1h-1zM485 278h1v1h-1zM485 266h1v1h-1zM485 253h1v1h-1zM485 241h1v1h-1zM485 228h1v1h-1zM485 216h1v1h-1zM485 203h1v1h-1zM485 191h1v1h-1zM485 178h1v1h-1zM485 166h1v1h-1zM485 153h1v1h-1zM485 141h1v1h-1zM485 128h1v1h-1zM485 116h1v1h-1zM485 103h1v1h-1zM485 91h1v1h-1zM497 353h1v1h-1zM497 341h1v1h-1zM497 328h1v1h-1zM497 316h1v1h-1zM497 303h1v1h-1zM497 291h1v1h-1zM497 278h1v1h-1zM497 266h1v1h-1zM497 253h1v1h-1zM497 241h1v1h-1zM497 228h1v1h-1zM497 216h1v1h-1zM497 203h1v1h-1zM497 191h1v1h-1zM497 178h1v1h-1zM497 166h1v1h-1zM497 153h1v1h-1zM497 141h1v1h-1zM497 128h1v1h-1zM497 116h1v1h-1zM497 103h1v1h-1zM497 91h1v1h-1zM510 353h1v1h-1zM510 341h1v1h-1zM510 328h1v1h-1zM510 316h1v1h-1zM510 303h1v1h-1zM510 291h1v1h-1zM510 278h1v1h-1zM510 266h1v1h-1zM510 253h1v1h-1zM510 241h1v1h-1zM510 228h1v1h-1zM510 216h1v1h-1zM510 203h1v1h-1zM510 191h1v1h-1zM510 178h1v1h-1zM510 166h1v1h-1zM510 153h1v1h-1zM510 141h1v1h-1zM510 128h1v1h-1zM510 116h1v1h-1zM510 103h1v1h-1zM510 91h1v1h-1zM522 353h1v1h-1zM522 341h1v1h-1zM522 328h1v1h-1zM522 316h1v1h-1zM522 303h1v1h-1zM522 291h1v1h-1zM522 278h1v1h-1zM522 266h1v1h-1zM522 253h1v1h-1zM522 241h1v1h-1zM522 228h1v1h-1zM522 216h1v1h-1zM522 203h1v1h-1zM522 191h1v1h-1zM522 178h1v1h-1zM522 166h1v1h-1zM522 153h1v1h-1zM522 141h1v1h-1zM522 128h1v1h-1zM522 116h1v1h-1zM522 103h1v1h-1zM522 91h1v1h-1zM535 353h1v1h-1zM535 341h1v1h-1zM535 328h1v1h-1zM535 316h1v1h-1zM535 303h1v1h-1zM535 291h1v1h-1zM535 278h1v1h-1zM535 266h1v1h-1zM535 253h1v1h-1zM535 241h1v1h-1zM535 228h1v1h-1zM535 216h1v1h-1zM535 203h1v1h-1zM535 191h1v1h-1zM535 178h1v1h-1zM535 166h1v1h-1zM535 153h1v1h-1zM535 141h1v1h-1zM535 128h1v1h-1zM535 116h1v1h-1zM535 103h1v1h-1zM535 91h1v1h-1zM547 353h1v1h-1zM547 341h1v1h-1zM547 328h1v1h-1zM547 316h1v1h-1zM547 303h1v1h-1zM547 291h1v1h-1zM547 278h1v1h-1zM547 266h1v1h-1zM547 253h1v1h-1zM547 241h1v1h-1zM547 228h1v1h-1zM547 216h1v1h-1zM547 203h1v1h-1zM547 191h1v1h-1zM547 178h1v1h-1zM547 166h1v1h-1zM547 153h1v1h-1zM547 141h1v1h-1zM547 128h1v1h-1zM547 116h1v1h-1zM547 103h1v1h-1zM547 91h1v1h-1z" fill="#454545"/>
 <clipPath id="hrc"><rect x="36" y="60" width="523" height="20"/></clipPath><g clip-path="url(#hrc)" font-family="Liberation Sans" font-size="4.9" fill="#1a1a1a"><rect x="47.25" y="75.9" width="0.9" height="1.6" fill="#222"/>
<rect x="59.75" y="74" width="0.9" height="3.5" fill="#222"/>
<text x="60.20" y="71.3" text-anchor="middle">-60</text>
<rect x="72.25" y="75.9" width="0.9" height="1.6" fill="#222"/>
<rect x="84.75" y="74" width="0.9" height="3.5" fill="#222"/>
<text x="85.20" y="71.3" text-anchor="middle">-40</text>
<rect x="97.25" y="75.9" width="0.9" height="1.6" fill="#222"/>
<rect x="109.75" y="74" width="0.9" height="3.5" fill="#222"/>
<text x="110.20" y="71.3" text-anchor="middle">-20</text>
<rect x="122.25" y="75.9" width="0.9" height="1.6" fill="#222"/>
<rect x="134.75" y="74" width="0.9" height="3.5" fill="#222"/>
<text x="135.20" y="71.3" text-anchor="middle">0</text>
<rect x="147.25" y="75.9" width="0.9" height="1.6" fill="#222"/>
<rect x="159.75" y="74" width="0.9" height="3.5" fill="#222"/>
<text x="160.20" y="71.3" text-anchor="middle">20</text>
<rect x="172.25" y="75.9" width="0.9" height="1.6" fill="#222"/>
<rect x="184.75" y="74" width="0.9" height="3.5" fill="#222"/>
<text x="185.20" y="71.3" text-anchor="middle">40</text>
<rect x="197.25" y="75.9" width="0.9" height="1.6" fill="#222"/>
<rect x="209.75" y="74" width="0.9" height="3.5" fill="#222"/>
<text x="210.20" y="71.3" text-anchor="middle">60</text>
<rect x="222.25" y="75.9" width="0.9" height="1.6" fill="#222"/>
<rect x="234.75" y="74" width="0.9" height="3.5" fill="#222"/>
<text x="235.20" y="71.3" text-anchor="middle">80</text>
<rect x="247.25" y="75.9" width="0.9" height="1.6" fill="#222"/>
<rect x="259.75" y="74" width="0.9" height="3.5" fill="#222"/>
<text x="260.20" y="71.3" text-anchor="middle">100</text>
<rect x="272.25" y="75.9" width="0.9" height="1.6" fill="#222"/>
<rect x="284.75" y="74" width="0.9" height="3.5" fill="#222"/>
<text x="285.20" y="71.3" text-anchor="middle">120</text>
<rect x="297.25" y="75.9" width="0.9" height="1.6" fill="#222"/>
<rect x="309.75" y="74" width="0.9" height="3.5" fill="#222"/>
<text x="310.20" y="71.3" text-anchor="middle">140</text>
<rect x="322.25" y="75.9" width="0.9" height="1.6" fill="#222"/>
<rect x="334.75" y="74" width="0.9" height="3.5" fill="#222"/>
<text x="335.20" y="71.3" text-anchor="middle">160</text>
<rect x="347.25" y="75.9" width="0.9" height="1.6" fill="#222"/>
<rect x="359.75" y="74" width="0.9" height="3.5" fill="#222"/>
<text x="360.20" y="71.3" text-anchor="middle">180</text>
<rect x="372.25" y="75.9" width="0.9" height="1.6" fill="#222"/>
<rect x="384.75" y="74" width="0.9" height="3.5" fill="#222"/>
<text x="385.20" y="71.3" text-anchor="middle">200</text>
<rect x="397.25" y="75.9" width="0.9" height="1.6" fill="#222"/>
<rect x="409.75" y="74" width="0.9" height="3.5" fill="#222"/>
<text x="410.20" y="71.3" text-anchor="middle">220</text>
<rect x="422.25" y="75.9" width="0.9" height="1.6" fill="#222"/>
<rect x="434.75" y="74" width="0.9" height="3.5" fill="#222"/>
<text x="435.20" y="71.3" text-anchor="middle">240</text>
<rect x="447.25" y="75.9" width="0.9" height="1.6" fill="#222"/>
<rect x="459.75" y="74" width="0.9" height="3.5" fill="#222"/>
<text x="460.20" y="71.3" text-anchor="middle">260</text>
<rect x="472.25" y="75.9" width="0.9" height="1.6" fill="#222"/>
<rect x="484.75" y="74" width="0.9" height="3.5" fill="#222"/>
<text x="485.20" y="71.3" text-anchor="middle">280</text>
<rect x="497.25" y="75.9" width="0.9" height="1.6" fill="#222"/>
<rect x="509.75" y="74" width="0.9" height="3.5" fill="#222"/>
<text x="510.20" y="71.3" text-anchor="middle">300</text>
<rect x="522.25" y="75.9" width="0.9" height="1.6" fill="#222"/>
<rect x="534.75" y="74" width="0.9" height="3.5" fill="#222"/>
<text x="535.20" y="71.3" text-anchor="middle">320</text>
<rect x="547.25" y="75.9" width="0.9" height="1.6" fill="#222"/>
<rect x="559.75" y="74" width="0.9" height="3.5" fill="#222"/>
<text x="560.20" y="71.3" text-anchor="middle">340</text></g>
 <clipPath id="vrc"><rect x="36" y="77" width="11.3" height="289"/></clipPath><g clip-path="url(#vrc)" font-family="Liberation Sans" font-size="4.9" fill="#1a1a1a"><rect x="44" y="365.85" width="3.6" height="0.9" fill="#222"/>
<text transform="translate(41.1 365.60) rotate(-90)" text-anchor="middle">-100</text>
<rect x="45.9" y="353.35" width="1.7" height="0.9" fill="#222"/>
<rect x="44" y="340.85" width="3.6" height="0.9" fill="#222"/>
<text transform="translate(41.1 340.60) rotate(-90)" text-anchor="middle">-80</text>
<rect x="45.9" y="328.35" width="1.7" height="0.9" fill="#222"/>
<rect x="44" y="315.85" width="3.6" height="0.9" fill="#222"/>
<text transform="translate(41.1 315.60) rotate(-90)" text-anchor="middle">-60</text>
<rect x="45.9" y="303.35" width="1.7" height="0.9" fill="#222"/>
<rect x="44" y="290.85" width="3.6" height="0.9" fill="#222"/>
<text transform="translate(41.1 290.60) rotate(-90)" text-anchor="middle">-40</text>
<rect x="45.9" y="278.35" width="1.7" height="0.9" fill="#222"/>
<rect x="44" y="265.85" width="3.6" height="0.9" fill="#222"/>
<text transform="translate(41.1 265.60) rotate(-90)" text-anchor="middle">-20</text>
<rect x="45.9" y="253.35" width="1.7" height="0.9" fill="#222"/>
<rect x="44" y="240.85" width="3.6" height="0.9" fill="#222"/>
<text transform="translate(41.1 240.60) rotate(-90)" text-anchor="middle">0</text>
<rect x="45.9" y="228.35" width="1.7" height="0.9" fill="#222"/>
<rect x="44" y="215.85" width="3.6" height="0.9" fill="#222"/>
<text transform="translate(41.1 215.60) rotate(-90)" text-anchor="middle">20</text>
<rect x="45.9" y="203.35" width="1.7" height="0.9" fill="#222"/>
<rect x="44" y="190.85" width="3.6" height="0.9" fill="#222"/>
<text transform="translate(41.1 190.60) rotate(-90)" text-anchor="middle">40</text>
<rect x="45.9" y="178.35" width="1.7" height="0.9" fill="#222"/>
<rect x="44" y="165.85" width="3.6" height="0.9" fill="#222"/>
<text transform="translate(41.1 165.60) rotate(-90)" text-anchor="middle">60</text>
<rect x="45.9" y="153.35" width="1.7" height="0.9" fill="#222"/>
<rect x="44" y="140.85" width="3.6" height="0.9" fill="#222"/>
<text transform="translate(41.1 140.60) rotate(-90)" text-anchor="middle">80</text>
<rect x="45.9" y="128.35" width="1.7" height="0.9" fill="#222"/>
<rect x="44" y="115.85" width="3.6" height="0.9" fill="#222"/>
<text transform="translate(41.1 115.60) rotate(-90)" text-anchor="middle">100</text>
<rect x="45.9" y="103.35" width="1.7" height="0.9" fill="#222"/>
<rect x="44" y="90.85" width="3.6" height="0.9" fill="#222"/>
<text transform="translate(41.1 90.60) rotate(-90)" text-anchor="middle">120</text>
<rect x="45.9" y="78.35" width="1.7" height="0.9" fill="#222"/></g>
 <path d="M165.4 73.6h4l-2 2z" fill="#222"/>
 <path d="M45.3 188h-0.1v4l2-2z" fill="#222"/>
</svg>
<div id="dockstrip" class="a"></div>
<div id="dock" class="a"></div>
<div class="a" style="left:577.3px;top:54px;width:150px;height:11.9px;background:linear-gradient(#e6e6e6,#d6d6d6);border-bottom:0.9px solid #c2c2c2"></div>
<svg class="a" style="left:575px;top:50px" width="160" height="20" viewBox="575 50 160 20">
 <circle cx="582" cy="59.3" r="3.3" fill="#464646"/>
 <path d="M580.5 57.8l3 3M583.5 57.8l-3 3" stroke="#f0f0f0" stroke-width="1.1"/>
 <circle cx="591" cy="59.3" r="3.3" fill="#464646"/>
 <rect x="589.4" y="57.7" width="3.2" height="3.2" fill="none" stroke="#e0e0e0" stroke-width="0.6"/>
 <rect x="590.4" y="57.2" width="2.7" height="2.7" fill="#555" stroke="#e0e0e0" stroke-width="0.6"/>
</svg>
<span class="t" style="left:634.7px;top:56.5px;font-size:6px;color:#1a1a1a;-webkit-text-stroke:0.1px #1a1a1a">Eigenschafteneditor</span>
<span class="t" style="left:584px;top:75.0px;font-size:6.6px;color:#000;-webkit-text-stroke:0.1px #000">Auswahl:</span>
<div class="a combo" style="left:615.5px;top:72px;width:104.5px;height:10.4px"></div>
<span class="t" style="left:617px;top:75.0px;font-size:6.6px;color:#000;-webkit-text-stroke:0.1px #000">Keine Selektion</span>
<div class="a bluebtn" style="left:711.5px;top:73px;width:7.5px;height:8.5px"></div>
<span class="t" style="left:587.7px;top:86.8px;font-size:5.95px;color:#c4c4c4">Allgemeine Eigenschaften</span>
<div class="a" style="left:584.3px;top:91.6px;width:136.7px;height:93px;background:#e5e5e5;border:0.6px solid #d8d8d8;border-radius:2.5px"></div>
<div class="lbl" style="top:100.6px">Layer:</div>
<div class="lbl" style="top:113.6px">Farbe:</div>
<div class="lbl" style="top:125.6px">Linienbreite:</div>
<div class="lbl" style="top:137.4px">Linientyp:</div>
<div class="lbl" style="top:149.2px">Linientypskalierung:</div>
<div class="lbl" style="top:161.1px">Reihenfolge:</div>
<div class="lbl" style="top:172.4px">Handle:</div>
<div class="a combo" style="left:650px;top:98px;width:51.3px;height:10px"></div>
<div class="a bluebtn" style="left:693px;top:98.7px;width:7.6px;height:8.6px"></div>
<div class="a" style="left:703.2px;top:96.4px;width:13.5px;height:12.8px;background:#e6e6e6;border:0.6px solid #cfcfcf;border-radius:1.5px"></div>
<svg class="a" style="left:703px;top:96px" width="14" height="14" viewBox="0 0 14 14"><path d="M4 4.5h6M4 6.5h6M4 8.5h6" stroke="#b0b0b0" stroke-width="0.7"/></svg>
<div class="a combo" style="left:650px;top:111.5px;width:65.4px;height:9px"></div>
<div class="a bluebtn" style="left:707.3px;top:112px;width:7.6px;height:8px"></div>
<div class="a" style="left:651.2px;top:113.4px;width:8.5px;height:5.6px;border:0.6px solid #8a8a8a;border-radius:1px;background:#fff"></div>
<span class="t" style="left:662px;top:114.2px;font-size:6.4px;color:#000;-webkit-text-stroke:0.1px #000">Von Layer</span>
<div class="a combo" style="left:650px;top:123.6px;width:65.4px;height:8.8px"></div>
<div class="a bluebtn" style="left:707.3px;top:124px;width:7.6px;height:8px"></div>
<div class="a" style="left:652px;top:127.9px;width:7px;height:0.5px;background:#999"></div>
<span class="t" style="left:662px;top:126.2px;font-size:6.4px;color:#000;-webkit-text-stroke:0.1px #000">Von Layer</span>
<div class="a combo" style="left:650px;top:135.2px;width:65.4px;height:9px"></div>
<div class="a bluebtn" style="left:707.3px;top:135.8px;width:7.6px;height:8px"></div>
<span class="t" style="left:651.5px;top:137.9px;font-size:6.4px;color:#000;-webkit-text-stroke:0.1px #000">Von Layer</span>
<div class="a field" style="left:650px;top:146.6px;width:66.3px;height:9.4px"></div>
<div class="a field" style="left:650px;top:158.7px;width:66.3px;height:9.6px"></div>
<div class="a field" style="left:650px;top:169.7px;width:66.3px;height:9.4px"></div>

<div id="rtb" class="a"></div>
<div id="status" class="a"></div>
<!-- toolbar2 -->
<svg class="a" style="left:0;top:34px" width="40" height="20" viewBox="0 34 40 20">
 <g fill="#b8b8b8"><rect x="3.2" y="38.5" width="1.8" height="1.2"/><rect x="3.2" y="41.5" width="1.8" height="1.2"/><rect x="3.2" y="44.5" width="1.8" height="1.2"/><rect x="3.2" y="47.5" width="1.8" height="1.2"/></g>
 <defs><linearGradient id="b2" x1="0" y1="0" x2="0" y2="1"><stop offset="0" stop-color="#fbfbfb"/><stop offset="0.5" stop-color="#f0f0f0"/><stop offset="1" stop-color="#fafafa"/></linearGradient></defs>
 <rect x="7.6" y="36.8" width="21" height="14.5" rx="2.5" fill="url(#b2)" stroke="#7c7c7c" stroke-width="0.9"/>
 <path d="M15.3 39.7v7.8l1.8-1.7 1.3 2.6 1.1-.5-1.2-2.5h2.5z" fill="#fff" stroke="#666" stroke-width="0.6" stroke-linejoin="round"/>
 <path d="M33.5 35v18" stroke="#9a9a9a" stroke-width="0.7" stroke-dasharray="1.2 1.3"/>
</svg>
<!-- title icon -->
<svg class="a" style="left:45px;top:54px" width="12" height="12" viewBox="0 0 12 12">
 <circle cx="6.1" cy="5.4" r="2.6" fill="#f4f4f8" stroke="#3d5ca8" stroke-width="1.1"/>
 <path d="M6.6 5.6l1.3 1.4" stroke="#f0a020" stroke-width="1.2"/>
 <path d="M7.9 7l0.6 0.8" stroke="#e07070" stroke-width="0.9"/>
</svg>
<span class="t" style="left:294.7px;top:58.1px;font-size:5.95px;color:#222;-webkit-text-stroke:0.12px #222">Unbenannt 3</span>
<!-- dock tabs strip -->
<div class="a" style="left:567px;top:53.5px;width:10px;height:345.5px;background:linear-gradient(90deg,#f0f0f0,#e6e6e6)"></div>
<div class="a" style="left:567.8px;top:170px;width:10px;height:71.6px;background:#2c7df6;border-radius:1.5px 0 0 1.5px"></div>
<div class="a" style="left:567.8px;top:243.7px;width:10px;height:40.3px;background:#d2d2d2;border-radius:1.5px 0 0 1.5px"></div>
<span class="t" style="left:572.8px;top:205.8px;font-size:6.8px;color:#fff;-webkit-text-stroke:0.12px #fff;transform:translate(-50%,-50%) rotate(-90deg)">Eigenschafteneditor</span>
<span class="t" style="left:572.8px;top:263.8px;font-size:6.8px;color:#222;-webkit-text-stroke:0.12px #222;transform:translate(-50%,-50%) rotate(-90deg)">Layerliste</span>
<div class="a" style="left:561.8px;top:164px;width:3.8px;height:102px;background:#7c7c7c;border-radius:2px"></div>
<!-- h scroll/cmd -->
<div class="a" style="left:36px;top:365.7px;width:531px;height:8.5px;background:#f8f8f8"></div>
<div class="a" style="left:36px;top:365.7px;width:11.3px;height:6.3px;background:#ebebeb"></div>
<div class="a" style="left:222.8px;top:368.6px;width:307.2px;height:3.9px;background:#7c7c7c;border-radius:2px;box-shadow:0 0 0 0.4px #a0a0a0"></div>
<span class="t" style="left:542.3px;top:367.8px;font-size:6.3px;color:#000;-webkit-text-stroke:0.12px #000">10 &lt; 100</span>
<div class="a" style="left:36px;top:373.8px;width:531px;height:11.8px;background:#fff;border-top:0.7px solid #b9b9b9;border-bottom:0.6px solid #d8d8d8"></div>
<span class="t" style="left:38.3px;top:376.9px;font-size:6.6px;color:#1414c0;font-style:italic;-webkit-text-stroke:0.1px #1414c0">Kommando: text</span>
<div class="a" style="left:36px;top:385.6px;width:531px;height:13.4px;background:#ebebeb"></div>
<span class="t" style="left:36.8px;top:390.2px;font-size:6.6px;color:#000;-webkit-text-stroke:0.1px #000">Kommando:</span>
<div class="a" style="left:74.3px;top:387.8px;width:478.5px;height:9.7px;background:#fff"></div>
<div class="a" style="left:553.3px;top:386.5px;width:13px;height:11.5px;background:#e9e9e9;border:0.6px solid #c9c9c9"></div>
<svg class="a" style="left:553px;top:386px" width="14" height="13" viewBox="0 0 14 13"><rect x="3.5" y="3.5" width="7" height="5.5" fill="#fff" stroke="#222" stroke-width="0.8"/><rect x="3.5" y="3.5" width="7" height="1.6" fill="#222"/></svg>
<!-- right toolbar -->
<svg class="a" style="left:727px;top:53px" width="23" height="200" viewBox="727 53 23 200">
 <defs>
 <g id="win"><rect x="0" y="0" width="14.2" height="13.8" fill="#fff" stroke="#555" stroke-width="0.5"/><rect x="0" y="0" width="14.2" height="2.2" fill="#111"/><rect x="0.6" y="0.5" width="1.3" height="1.2" fill="#fff"/></g>
 </defs>
 <g fill="#777"><circle cx="731.5" cy="58.5" r="0.45"/><circle cx="734" cy="58.5" r="0.45"/><circle cx="736.5" cy="58.5" r="0.45"/><circle cx="739" cy="58.5" r="0.45"/><circle cx="741.5" cy="58.5" r="0.45"/><circle cx="744" cy="58.5" r="0.45"/></g>
 <rect x="728" y="60.2" width="21" height="20.8" rx="1.5" fill="#b8b8b8"/>
 <use href="#win" x="731.4" y="63.5"/>
 <path d="M735.2 70.6l2.8-2.2v5.8l-2.8 1.6z" fill="#6a6a6a"/>
 <path d="M738 68.4l3.3-1.6 0.6 0.4v4.6l-3.9 2.4z" fill="#f2d6d6" stroke="#c8c8c8" stroke-width="0.3"/>
 <path d="M738.6 72.8l2.8-4.6" stroke="#e88a8a" stroke-width="1"/>
 <use href="#win" x="731.4" y="87"/>
 <rect x="735.5" y="92.3" width="4" height="3.5" fill="#e8d890" stroke="#777" stroke-width="0.5"/><rect x="737.5" y="94.3" width="4" height="3.5" fill="#e8d890" stroke="#777" stroke-width="0.5"/>
 <use href="#win" x="731.4" y="110"/>
 <rect x="734.2" y="114.5" width="8.8" height="6" fill="#e8eef8" stroke="#9ab" stroke-width="0.5"/>
 <path d="M728 130.4h21" stroke="#a8a8a8" stroke-width="0.6" stroke-dasharray="1.2 1.2"/>
 <rect x="728" y="135.1" width="21" height="19.9" rx="1.5" fill="#b8b8b8"/>
 <use href="#win" x="731.4" y="138"/>
 <g fill="#111"><rect x="733.5" y="142" width="1.5" height="1.5"/><rect x="733.5" y="145" width="1.5" height="1.5"/><rect x="733.5" y="148" width="1.5" height="1.5"/></g>
 <g stroke="#555" stroke-width="0.5"><path d="M735.5 142.7h8M735.5 145.7h8M735.5 148.7h8"/></g>
 <use href="#win" x="731.4" y="161.2"/>
 <path d="M734 165.5h9l-3.3 4v4h-2.4v-4z" fill="#ddd" stroke="#333" stroke-width="0.6"/>
 <use href="#win" x="731.4" y="184.3"/>
 <rect x="735" y="189" width="2" height="7" fill="none" stroke="#333" stroke-width="0.5"/><rect x="737.5" y="190.5" width="5" height="4" fill="#333"/>
 <path d="M733 192.5h2.2" stroke="#e05050" stroke-width="0.6"/>
 <path d="M728 205.4h21" stroke="#a8a8a8" stroke-width="0.6" stroke-dasharray="1.2 1.2"/>
 <rect x="728" y="209.7" width="21" height="20.3" rx="1.5" fill="#b8b8b8"/>
 <use href="#win" x="731.4" y="212.3"/>
 <g stroke="#888" stroke-width="0.4"><path d="M733 217h5M733 218.5h4.5M733 220.5h5M733 222h5M740 224.5h4"/></g>
 <use href="#win" x="731.4" y="235.8"/>
 <rect x="735.3" y="239.8" width="6.5" height="8" rx="0.8" fill="#f4f4f4" stroke="#c08030" stroke-width="0.8"/>
 <rect x="737.2" y="239.2" width="2.8" height="1.4" fill="#999"/>
</svg>
<!-- status -->
<span class="t st" style="left:1.2px;top:403.8px">25.8,41.1</span>
<span class="t st" style="left:1.2px;top:413.5px">@25.8,41.1</span>
<div class="a" style="left:126px;top:401px;width:0.7px;height:20px;background:#a8a8a8;box-shadow:0.7px 0 0 #f0f0f0"></div>
<span class="t st" style="left:127.8px;top:404px">48.5268&lt;58°</span>
<span class="t st" style="left:127.8px;top:413.5px">@48.5268&lt;58°</span>
<div class="a" style="left:253.8px;top:409.6px;width:2px;height:2px;border-radius:1px;background:#c2c2c2"></div>
<span class="t st" style="left:274px;top:408.5px">Element oder Bereich selektieren</span>
<svg class="a" style="left:356px;top:402px" width="14" height="17" viewBox="356 402 14 17">
 <rect x="358.3" y="403.3" width="9.5" height="13.7" rx="4.7" fill="#fff" stroke="#333" stroke-width="0.6"/>
 <path d="M358.3 409h9.5M363 403.3v5.7" stroke="#333" stroke-width="0.5"/>
 <rect x="362.2" y="404.5" width="1.6" height="3" fill="#555"/>
</svg>
<div class="a" style="left:470px;top:409.6px;width:2px;height:2px;border-radius:1px;background:#c2c2c2"></div>
<span class="t st" style="left:474.5px;top:408.5px">Keine Objekte selektiert.</span>
<div class="a" style="left:635px;top:409.6px;width:2px;height:2px;border-radius:1px;background:#c2c2c2"></div>
<!-- cursor ring + crosshair -->
<svg class="a" style="left:0;top:0" width="750" height="422" viewBox="0 0 750 422">
 <defs><filter id="blur" x="-50%" y="-50%" width="200%" height="200%"><feGaussianBlur stdDeviation="0.9"/></filter>
 <filter id="blur2" x="-50%" y="-50%" width="200%" height="200%"><feGaussianBlur stdDeviation="0.45"/></filter></defs>
 <radialGradient id="ringg" cx="0.5" cy="0.5" r="0.5"><stop offset="0" stop-color="#000" stop-opacity="0"/><stop offset="0.72" stop-color="#000" stop-opacity="0"/><stop offset="0.84" stop-color="#26313b" stop-opacity="0.85"/><stop offset="0.93" stop-color="#4f5f6d" stop-opacity="0.92"/><stop offset="0.985" stop-color="#6a7b89"/><stop offset="1" stop-color="#55636f"/></radialGradient>
 <circle cx="297.5" cy="203.3" r="19.6" fill="url(#ringg)"/>
 <g filter="url(#blur2)">
 <path d="M124.8 241.3h20.6M135.1 231v20.6" stroke="#880000" stroke-width="1.4"/>
 <circle cx="135.1" cy="241.3" r="2.4" fill="#600000" stroke="#a80000" stroke-width="1.2"/>
 </g>
 <path d="M297.4 203.1V214.5L300.2 211.8L302.6 217.6L304.6 216.8L302.3 211.2H305.6Z" fill="#f6f6f6" stroke="#333" stroke-width="0.8" stroke-linejoin="round"/>
</svg>

</body></html>
